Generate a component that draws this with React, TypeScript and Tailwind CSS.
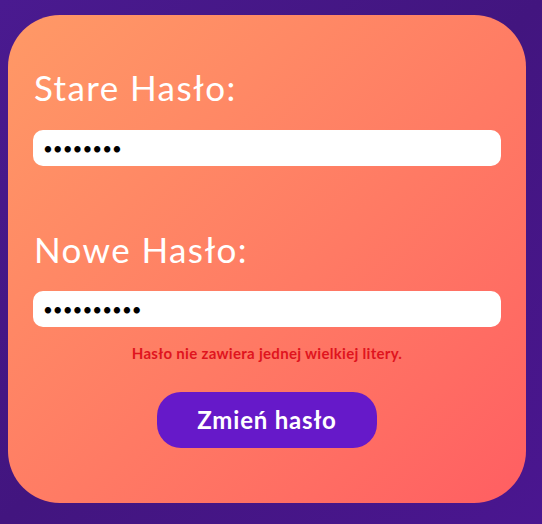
import React from "react";

export default function App() {
  return (
    <div className="w-[542px] h-[524px] bg-gradient-to-br from-[#4a1a90] via-[#42157f] to-[#4a1690] pt-[15px] pl-[8px]" style={{ fontFamily: "Lato, 'Open Sans', sans-serif" }}>
      <div className="w-[518px] h-[488px] rounded-[52px] bg-gradient-to-br from-[#ff9966] to-[#ff5e62] px-[25px] pt-[52px] flex flex-col">
        <label className="text-white text-[35px] leading-[40px] font-normal tracking-[1.4px] pl-[1px]">Stare Hasło:</label>
        <input
          type="password"
          defaultValue="12345678"
          className="mt-[23px] h-[36px] w-full rounded-[10px] bg-white px-[10px] text-[17px] text-black outline-none"
        />
        <label className="mt-[63px] text-white text-[35px] leading-[40px] font-normal tracking-[1.4px] pl-[1px]">Nowe Hasło:</label>
        <input
          type="password"
          defaultValue="1234567890"
          className="mt-[22px] h-[36px] w-full rounded-[10px] bg-white px-[10px] text-[17px] text-black outline-none"
        />
        <p className="mt-[17px] text-center text-[15px] leading-[18px] font-bold tracking-[0.3px] text-[#e0141e]">Hasło nie zawiera jednej wielkiej litery.</p>
        <div className="mt-[30px] flex justify-center">
          <button className="w-[220px] h-[56px] rounded-[24px] bg-[#6619c9] text-white text-[24px] font-bold tracking-[0.8px]">Zmień hasło</button>
        </div>
      </div>
    </div>
  );
}
